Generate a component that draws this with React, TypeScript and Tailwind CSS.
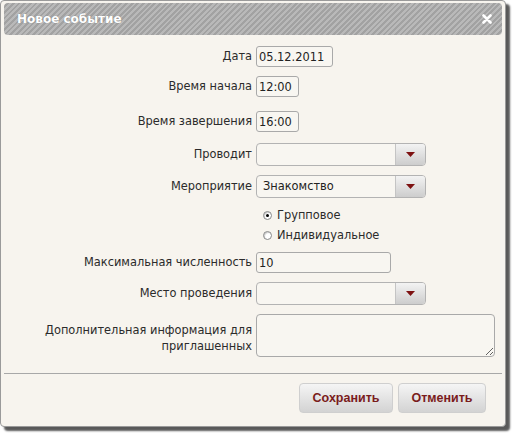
import React, { useState } from 'react';

const labelCls = 'w-[252px] shrink-0 pr-[4px] text-right text-[11.4px] leading-[15px] text-[#2b2b2b]';
const inputCls =
  'h-[21px] rounded-[3px] border border-[#a9a9a9] bg-[#f8f6f1] px-[2px] text-[11.4px] text-[#222] outline-none';
const buttonCls =
  'h-[30px] rounded-[4px] border border-[#cfcfcf] bg-gradient-to-b from-[#f5f5f5] to-[#d3d3d3] text-[12.5px] font-bold text-[#7a1c1c]';

const SelectBox: React.FC<{ value?: string }> = ({ value }) => (
  <div className="flex h-[23px] w-[170px] overflow-hidden rounded-[4px] border border-[#b3b3b3] bg-[#f8f6f1]">
    <div className="flex flex-1 items-center px-[6px] text-[11.4px] text-[#222]">{value}</div>
    <div className="flex w-[30px] items-center justify-center border-l border-[#c4c4c4] bg-gradient-to-b from-[#f3f3f3] to-[#cdcdcd]">
      <svg width="9" height="5" viewBox="0 0 9 5">
        <path d="M0 0h9L4.5 5z" fill="#7d1212" />
      </svg>
    </div>
  </div>
);

const Radio: React.FC<{ checked: boolean; label: string; onClick: () => void }> = ({ checked, label, onClick }) => (
  <div className="flex h-[15px] cursor-pointer items-center gap-[5px]" onClick={onClick}>
    <span className="flex h-[9px] w-[9px] items-center justify-center rounded-full border border-[#888] bg-white shadow-[inset_1px_1px_1px_rgba(0,0,0,0.2)]">
      {checked && <span className="h-[3px] w-[3px] rounded-full bg-black" />}
    </span>
    <span className="text-[11.4px] leading-[15px] text-[#2b2b2b]">{label}</span>
  </div>
);

export default function App() {
  const [kind, setKind] = useState<'group' | 'single'>('group');

  return (
    <div className="h-[434px] w-[512px] bg-white" style={{ fontFamily: '"DejaVu Sans", sans-serif' }}>
      <div className="flex h-[427px] w-[506px] flex-col rounded-[4px] border border-[#9a9a9a] bg-[#f7f4ee] shadow-[4px_4px_2px_rgba(0,0,0,0.65)]">
        {/* Title bar */}
        <div className="mx-[3px] mt-[2px] flex h-[32px] items-center justify-between rounded-[4px] bg-[repeating-linear-gradient(135deg,#b9b9b9_0px,#b9b9b9_2px,#a2a2a2_2px,#a2a2a2_4px)] pl-[13px] pr-[10px]">
          <span className="text-[12px] font-bold text-white [text-shadow:0_0_1px_rgba(0,0,0,0.3)]">Новое событие</span>
          <svg width="10" height="10" viewBox="0 0 10 10">
            <path d="M1.5 1.5l7 7M8.5 1.5l-7 7" stroke="#fff" strokeWidth="2.6" strokeLinecap="round" />
          </svg>
        </div>

        {/* Form */}
        <div className="flex flex-1 flex-col pl-[3px] pt-[11px]">
          <div className="flex items-center">
            <span className={labelCls}>Дата</span>
            <input className={`${inputCls} w-[77px]`} defaultValue="05.12.2011" />
          </div>
          <div className="mt-[9px] flex items-center">
            <span className={labelCls}>Время начала</span>
            <input className={`${inputCls} w-[43px]`} defaultValue="12:00" />
          </div>
          <div className="mt-[14px] flex items-center">
            <span className={labelCls}>Время завершения</span>
            <input className={`${inputCls} w-[43px]`} defaultValue="16:00" />
          </div>
          <div className="mt-[11px] flex items-center">
            <span className={labelCls}>Проводит</span>
            <SelectBox />
          </div>
          <div className="mt-[9px] flex items-center">
            <span className={labelCls}>Мероприятие</span>
            <SelectBox value="Знакомство" />
          </div>
          <div className="mt-[10px] flex flex-col gap-[5px] pl-[259px]">
            <Radio checked={kind === 'group'} label="Групповое" onClick={() => setKind('group')} />
            <Radio checked={kind === 'single'} label="Индивидуальное" onClick={() => setKind('single')} />
          </div>
          <div className="mt-[9px] flex items-center">
            <span className={labelCls}>Максимальная численность</span>
            <input className={`${inputCls} w-[135px]`} defaultValue="10" />
          </div>
          <div className="mt-[9px] flex items-center">
            <span className={labelCls}>Место проведения</span>
            <SelectBox />
          </div>
          <div className="mt-[9px] flex items-center">
            <span className={`${labelCls} pt-[4px] leading-[16px]`}>
              Дополнительная информация для
              <br />
              приглашенных
            </span>
            <textarea className="h-[43px] w-[239px] resize rounded-[4px] border border-[#a9a9a9] bg-[#f8f6f1] text-[11.4px] outline-none" />
          </div>
        </div>

        {/* Footer */}
        <div className="mx-[3px] border-t border-[#a8a8a8]" />
        <div className="flex justify-end gap-[5px] pb-[13px] pr-[19px] pt-[9px]" style={{ fontFamily: '"Liberation Sans", sans-serif' }}>
          <button className={`${buttonCls} w-[94px]`}>Сохранить</button>
          <button className={`${buttonCls} w-[88px]`}>Отменить</button>
        </div>
      </div>
    </div>
  );
}
